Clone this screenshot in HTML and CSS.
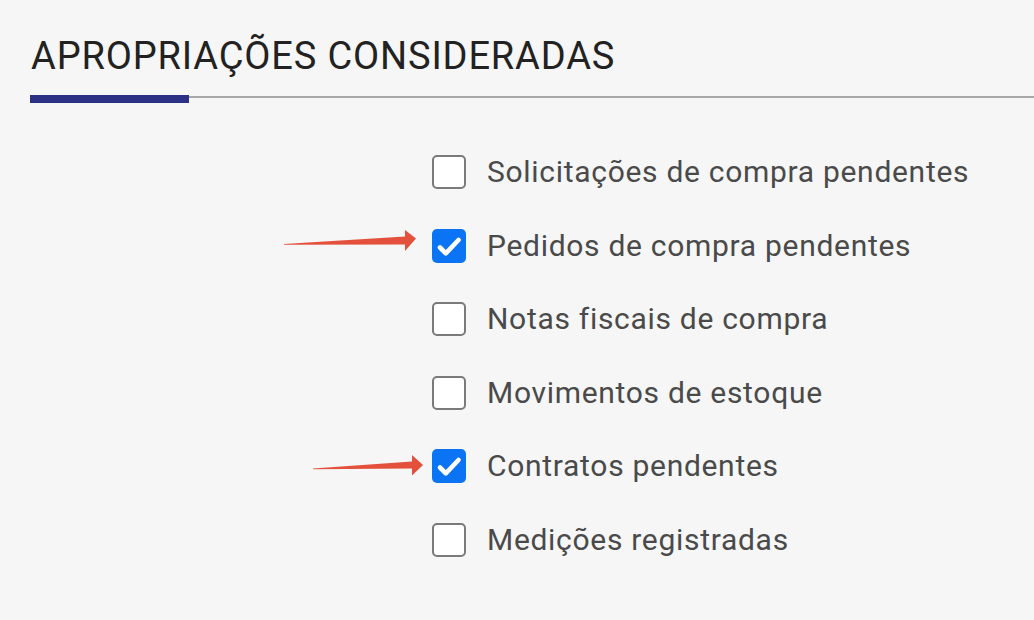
FILE: index.html
```html
<!DOCTYPE html>
<html lang="pt-BR">
<head>
<meta charset="utf-8">
<link rel="stylesheet" href="styles.css">
</head>
<body>
<div class="page">
  <header class="section-head">
    <h1 class="title">APROPRIAÇÕES CONSIDERADAS</h1>
    <div class="rule"><span class="rule-accent"></span></div>
  </header>
  <ul class="options">
    <li class="option"><span class="box"></span><span class="label">Solicitações de compra pendentes</span></li>
    <li class="option"><span class="box checked"><svg viewBox="0 0 34 34" width="34" height="34"><path d="M8 18.5 L13.8 24.3 L26.5 11" fill="none" stroke="#fff" stroke-width="4.6" stroke-linecap="round" stroke-linejoin="round"/></svg></span><span class="label">Pedidos de compra pendentes</span></li>
    <li class="option"><span class="box"></span><span class="label">Notas fiscais de compra</span></li>
    <li class="option"><span class="box"></span><span class="label">Movimentos de estoque</span></li>
    <li class="option"><span class="box checked"><svg viewBox="0 0 34 34" width="34" height="34"><path d="M8 18.5 L13.8 24.3 L26.5 11" fill="none" stroke="#fff" stroke-width="4.6" stroke-linecap="round" stroke-linejoin="round"/></svg></span><span class="label">Contratos pendentes</span></li>
    <li class="option"><span class="box"></span><span class="label">Medições registradas</span></li>
  </ul>
  <svg class="arrow arrow-1" width="140" height="30" viewBox="0 0 140 30">
    <polygon points="0,15 121,7.5 121,1 132,9.5 121,22 121,15.5 0,15.8" fill="#e3503c"/>
  </svg>
  <svg class="arrow arrow-2" width="120" height="30" viewBox="0 0 120 30">
    <polygon points="0,13.5 99,6.5 99,0 110,10 99,20.5 99,13.5 0,14.3" fill="#e3503c"/>
  </svg>
</div>
</body>
</html>
```
FILE: styles.css
```css
html, body {
  margin: 0;
  padding: 0;
  background: #f6f6f6;
}
.page {
  position: relative;
  width: 1034px;
  height: 620px;
  overflow: hidden;
  font-family: Roboto, "Liberation Sans", sans-serif;
}
.section-head {
  padding-top: 32px;
}
.title {
  margin: 0 0 0 31px;
  font-size: 38px;
  font-weight: 400;
  line-height: 48px;
  color: #222;
  letter-spacing: 0.85px;
}
.rule {
  margin-top: 15px;
  height: 8px;
  display: flex;
  align-items: flex-start;
  background: linear-gradient(#f6f6f6 1px, #a8a8a8 1px, #a8a8a8 3px, #f6f6f6 3px);
  margin-left: 30px;
}
.rule-accent {
  width: 159px;
  height: 8px;
  background: #2c3185;
}
.options {
  list-style: none;
  margin: 0;
  padding: 52px 0 0 432px;
  display: flex;
  flex-direction: column;
  gap: 39.5px;
}
.option {
  display: flex;
  align-items: center;
  height: 34px;
}
.box {
  width: 34px;
  height: 34px;
  box-sizing: border-box;
  border: 2.5px solid #7a7a7a;
  border-radius: 5px;
  background: #fff;
  flex: none;
  display: flex;
}
.box.checked {
  border: none;
  background: #0b74f5;
}
.label {
  margin-left: 21px;
  font-size: 30px;
  color: #4a4a4a;
  line-height: 34px;
  letter-spacing: 0.7px;
}
.arrow {
  position: absolute;
}
.arrow-1 {
  left: 284px;
  top: 229px;
}
.arrow-2 {
  left: 313px;
  top: 455px;
}
```
